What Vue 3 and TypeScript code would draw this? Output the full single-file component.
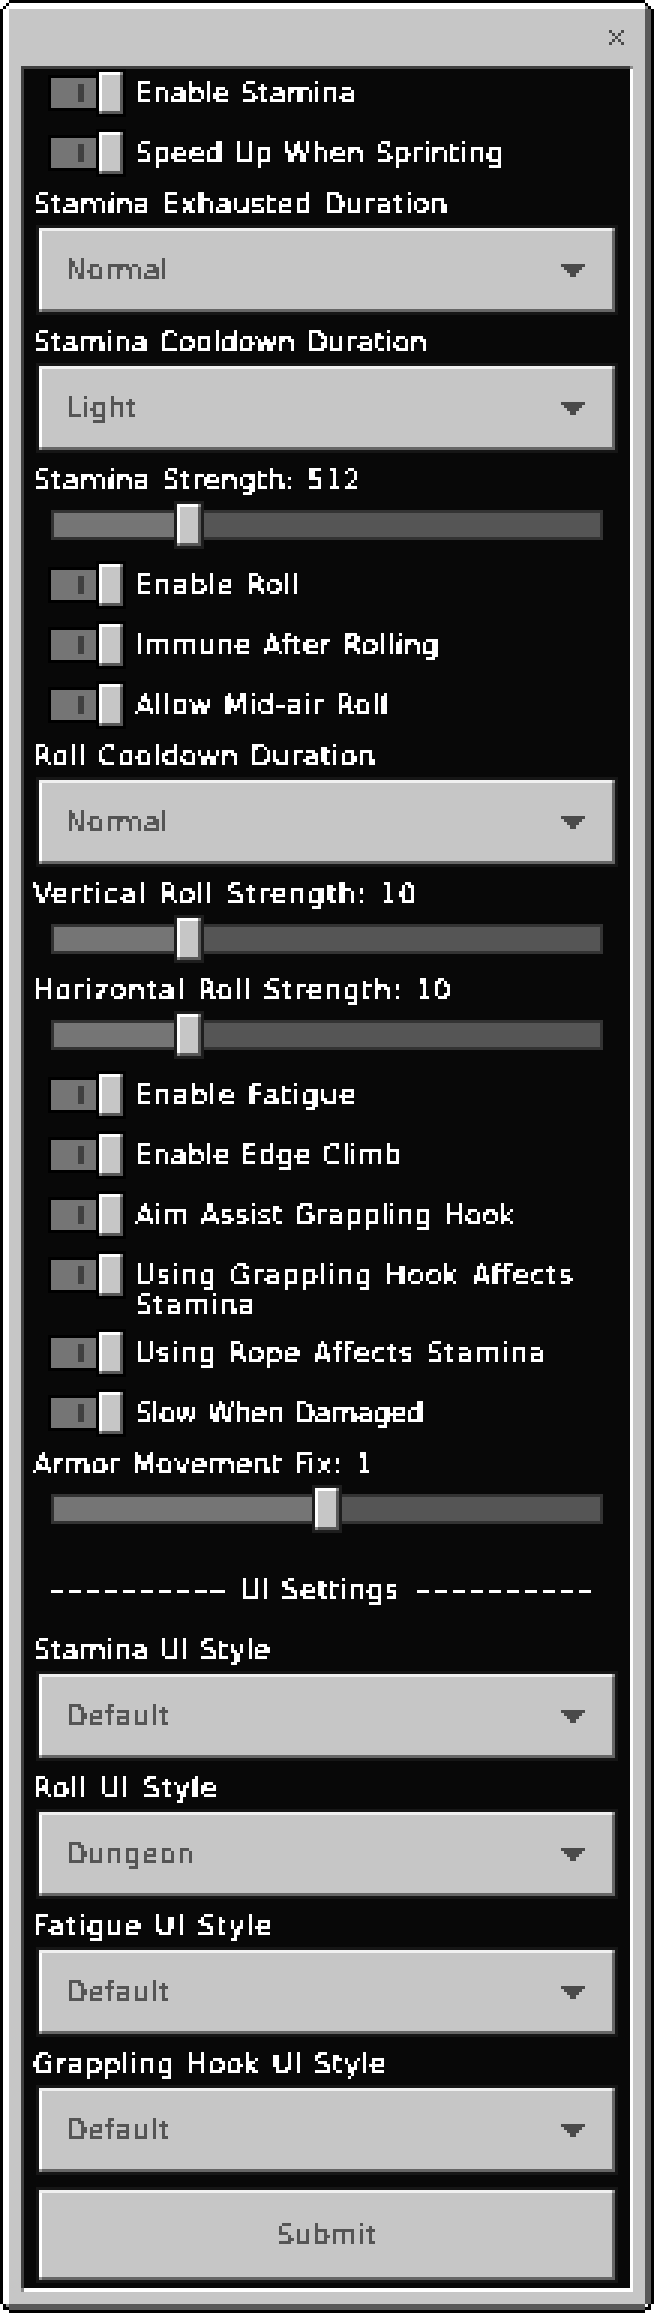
<script setup lang="ts">
type Item =
  | { kind: 'toggle'; label: string; fit?: number }
  | { kind: 'select'; label: string; value: string; fit?: number }
  | { kind: 'slider'; label: string; pos: number; fit?: number }
  | { kind: 'divider'; label: string; fit?: number }

const items: Item[] = [
  { kind: 'toggle', label: 'Enable Stamina', fit: -0.2 },
  { kind: 'toggle', label: 'Speed Up When Sprinting' },
  { kind: 'select', label: 'Stamina Exhausted Duration', value: 'Normal' },
  { kind: 'select', label: 'Stamina Cooldown Duration', value: 'Light', fit: -0.4 },
  { kind: 'slider', label: 'Stamina Strength: 512', pos: 123 },
  { kind: 'toggle', label: 'Enable Roll', fit: 0.65 },
  { kind: 'toggle', label: 'Immune After Rolling', fit: 0.15 },
  { kind: 'toggle', label: 'Allow Mid-air Roll', fit: 0.4 },
  { kind: 'select', label: 'Roll Cooldown Duration', value: 'Normal', fit: 0.2 },
  { kind: 'slider', label: 'Vertical Roll Strength: 10', pos: 123, fit: 0.8 },
  { kind: 'slider', label: 'Horizontal Roll Strength: 10', pos: 123, fit: 0.58 },
  { kind: 'toggle', label: 'Enable Fatigue', fit: 0.84 },
  { kind: 'toggle', label: 'Enable Edge Climb', fit: -0.17 },
  { kind: 'toggle', label: 'Aim Assist Grappling Hook' },
  { kind: 'toggle', label: 'Using Grappling Hook Affects Stamina', fit: 0.69 },
  { kind: 'toggle', label: 'Using Rope Affects Stamina', fit: 0.57 },
  { kind: 'toggle', label: 'Slow When Damaged', fit: -1 },
  { kind: 'slider', label: 'Armor Movement Fix: 1', pos: 261 },
  { kind: 'divider', label: 'UI Settings' },
  { kind: 'select', label: 'Stamina UI Style', value: 'Default', fit: -0.28 },
  { kind: 'select', label: 'Roll UI Style', value: 'Dungeon', fit: 0.68 },
  { kind: 'select', label: 'Fatigue UI Style', value: 'Default', fit: 0.74 },
  { kind: 'select', label: 'Grappling Hook UI Style', value: 'Default', fit: 0.26 },
]

const track = (base: number, fit?: number) => ({ letterSpacing: `${base + (fit ?? 0)}px` })
</script>

<template>
  <div class="frame">
    <svg class="defs" width="0" height="0" aria-hidden="true">
      <filter id="px" x="0" y="0" width="100%" height="100%" color-interpolation-filters="sRGB">
        <feFlood x="1" y="1" width="1" height="1" />
        <feComposite width="3" height="3" />
        <feTile result="grid" />
        <feGaussianBlur in="SourceGraphic" stdDeviation="0.8" result="soft" />
        <feComposite in="soft" in2="grid" operator="in" />
        <feComponentTransfer>
          <feFuncA type="discrete" tableValues="0 0 0 1 1 1 1 1" />
        </feComponentTransfer>
        <feMorphology operator="dilate" radius="1" />
      </filter>
    </svg>
    <div class="window">
      <header class="head">
        <svg class="close" width="15" height="15" viewBox="0 0 15 15" shape-rendering="crispEdges">
          <path d="M0 0h3v3H0zM12 0h3v3h-3zM3 3h3v3H3zM9 3h3v3H9zM6 6h3v3H6zM3 9h3v3H3zM9 9h3v3H9zM0 12h3v3H0zM12 12h3v3h-3z" fill="#4a4a4a" />
        </svg>
      </header>
      <main class="panel">
        <template v-for="item in items" :key="item.label">
          <div v-if="item.kind === 'toggle'" class="toggle-row">
            <div class="toggle">
              <div class="track"><span class="notch"></span></div>
              <div class="knob-wrap"><div class="knob"></div></div>
            </div>
            <span class="toggle-text pixel" :style="track(0.4, item.fit)">{{ item.label }}</span>
          </div>

          <div v-else-if="item.kind === 'select'" class="field">
            <div class="label pixel" :style="track(0.6, item.fit)">{{ item.label }}</div>
            <div class="outline">
              <div class="btn select">
                <span class="value pixel">{{ item.value }}</span>
                <svg width="24" height="13" viewBox="0 0 24 13" shape-rendering="crispEdges">
                  <path d="M0 0h24v3h-3v3h-3v3h-3v4H9V9H6V6H3V3H0z" fill="#4a4a4a" />
                </svg>
              </div>
            </div>
          </div>

          <div v-else-if="item.kind === 'slider'" class="field">
            <div class="label pixel" :style="track(0.6, item.fit)">{{ item.label }}</div>
            <div class="slider">
              <div class="rail">
                <div class="fill" :style="{ width: item.pos + 'px' }"></div>
              </div>
              <div class="slider-knob" :style="{ left: item.pos + 'px' }"><div class="knob"></div></div>
            </div>
          </div>

          <div v-else class="divider pixel">
            <span class="dash-box"><span class="dashes">----------</span></span>
            <span>{{ item.label }}</span>
            <span class="dash-box"><span class="dashes">----------</span></span>
          </div>
        </template>

        <div class="outline submit-wrap">
          <div class="btn submit"><span class="value pixel">Submit</span></div>
        </div>
      </main>
    </div>
  </div>
</template>

<style>
html, body { margin: 0; background: #fff; }
</style>

<style scoped>
.frame {
  box-sizing: border-box;
  width: 654px;
  height: 2313px;
  padding: 9px;
  font-family: "DejaVu Sans", sans-serif;
  font-size: 27.5px;
  letter-spacing: 0.6px;
  word-spacing: 2px;
  background:
    linear-gradient(#000, #000) 3px 6px / 3px 3px no-repeat,
    linear-gradient(#000, #000) 6px 3px / 3px 3px no-repeat,
    linear-gradient(#8a8a8a, #8a8a8a) 645px 6px / 3px 3px no-repeat,
    linear-gradient(#000, #000) 648px 6px / 3px 3px no-repeat,
    linear-gradient(#000, #000) 645px 3px / 3px 3px no-repeat,
    linear-gradient(#8a8a8a, #8a8a8a) 6px 2304px / 3px 3px no-repeat,
    linear-gradient(#000, #000) 3px 2304px / 3px 6px no-repeat,
    linear-gradient(#000, #000) 6px 2307px / 3px 3px no-repeat,
    linear-gradient(#000, #000) 648px 2304px / 3px 3px no-repeat,
    linear-gradient(#000, #000) 645px 2307px / 6px 3px no-repeat,
    linear-gradient(#000, #000) 9px 0 / 636px 3px no-repeat,
    linear-gradient(#000, #000) 0 9px / 3px 2295px no-repeat,
    linear-gradient(#000, #000) 9px 2310px / 636px 3px no-repeat,
    linear-gradient(#000, #000) 651px 9px / 3px 2295px no-repeat,
    linear-gradient(#fff, #fff) 9px 3px / 636px 6px no-repeat,
    linear-gradient(#fff, #fff) 3px 9px / 6px 2295px no-repeat,
    linear-gradient(#585858, #585858) 9px 2304px / 636px 6px no-repeat,
    linear-gradient(#585858, #585858) 645px 9px / 6px 2295px no-repeat;
}

.defs { position: absolute; }

.pixel { filter: url(#px); }

.window {
  display: flex;
  flex-direction: column;
  height: 100%;
  padding: 0 12px 12px;
  box-sizing: border-box;
  background: #c6c6c6;
}

.head {
  display: flex;
  justify-content: flex-end;
  flex: none;
  box-sizing: border-box;
  height: 57px;
  padding: 21px 9px 0 0;
}

.close { display: block; }

.panel {
  flex: 1;
  box-sizing: border-box;
  padding: 3px 3px 4px;
  color: #fff;
  background:
    linear-gradient(#8a8a8a, #8a8a8a) left bottom / 3px 4px no-repeat,
    linear-gradient(#8a8a8a, #8a8a8a) right top / 3px 3px no-repeat,
    linear-gradient(#404040, #404040) left top / 100% 3px no-repeat,
    linear-gradient(#404040, #404040) left top / 3px 100% no-repeat,
    linear-gradient(#fff, #fff) left bottom / 100% 4px no-repeat,
    linear-gradient(#fff, #fff) right top / 3px 100% no-repeat,
    #080808;
}

.toggle-row {
  display: flex;
  align-items: flex-start;
  gap: 9px;
  min-height: 48px;
  margin-top: 12px;
  padding-left: 24px;
  line-height: 30px;
}

.toggle-row:first-child { margin-top: 0; }

.toggle {
  position: relative;
  flex: none;
  width: 78px;
  height: 48px;
}

.track {
  position: absolute;
  left: 0;
  top: 6px;
  box-sizing: border-box;
  width: 51px;
  height: 36px;
  border: 3px solid #000;
  background: #757575;
}

.notch {
  display: block;
  position: absolute;
  left: 27px;
  top: 6px;
  width: 6px;
  height: 18px;
  background: #404040;
}

.knob-wrap {
  position: absolute;
  left: 48px;
  top: 0;
  box-sizing: border-box;
  width: 30px;
  height: 48px;
  border: 3px solid #000;
}

.knob {
  width: 100%;
  height: 100%;
  background:
    linear-gradient(#8a8a8a, #8a8a8a) left bottom / 3px 3px no-repeat,
    linear-gradient(#8a8a8a, #8a8a8a) right top / 3px 3px no-repeat,
    linear-gradient(#fff, #fff) left top / 100% 3px no-repeat,
    linear-gradient(#fff, #fff) left top / 3px 100% no-repeat,
    linear-gradient(#585858, #585858) left bottom / 100% 3px no-repeat,
    linear-gradient(#585858, #585858) right top / 3px 100% no-repeat,
    #c6c6c6;
}

.toggle-text {
  display: block;
  margin-top: 9px;
  margin-bottom: -3px;
  max-width: 480px;
}

.label {
  height: 36px;
  margin: 0 0 0 9px;
  padding-top: 12px;
  line-height: 30px;
}

.outline {
  box-sizing: border-box;
  width: 582px;
  height: 90px;
  margin-left: 12px;
  border: 3px solid #161616;
}

.btn {
  box-sizing: border-box;
  width: 100%;
  height: 100%;
  color: #555;
  background:
    linear-gradient(#9a9a9a, #9a9a9a) left bottom / 3px 3px no-repeat,
    linear-gradient(#9a9a9a, #9a9a9a) right top / 3px 3px no-repeat,
    linear-gradient(#f0f0f0, #f0f0f0) left top / 100% 3px no-repeat,
    linear-gradient(#fff, #fff) left top / 3px 100% no-repeat,
    linear-gradient(#666, #666) left bottom / 100% 3px no-repeat,
    linear-gradient(#666, #666) right top / 3px 100% no-repeat,
    #c6c6c6;
}

.value {
  display: block;
  line-height: 30px;
}

.select {
  display: flex;
  align-items: center;
  justify-content: space-between;
  padding: 0 30px 0 27px;
}

.slider {
  position: relative;
  height: 48px;
  margin-left: 27px;
  width: 552px;
}

.rail {
  position: absolute;
  left: 0;
  top: 9px;
  box-sizing: border-box;
  width: 100%;
  height: 30px;
  border: 3px solid #333;
  background: #555;
}

.fill {
  height: 100%;
  background: #757575;
}

.slider-knob {
  position: absolute;
  top: 0;
  box-sizing: border-box;
  width: 30px;
  height: 48px;
  border: 3px solid #1e1e1e;
}

.divider {
  display: flex;
  justify-content: space-between;
  box-sizing: border-box;
  height: 90px;
  padding: 42px 38px 0 24px;
  line-height: 30px;
  white-space: nowrap;
}

.dash-box {
  display: block;
  width: 177px;
}

.dashes {
  display: inline-block;
  transform: scaleX(1.8);
  transform-origin: left center;
  letter-spacing: 0;
}

.submit-wrap {
  height: 96px;
  margin-top: 12px;
}

.submit {
  display: flex;
  align-items: center;
  justify-content: center;
}
</style>
